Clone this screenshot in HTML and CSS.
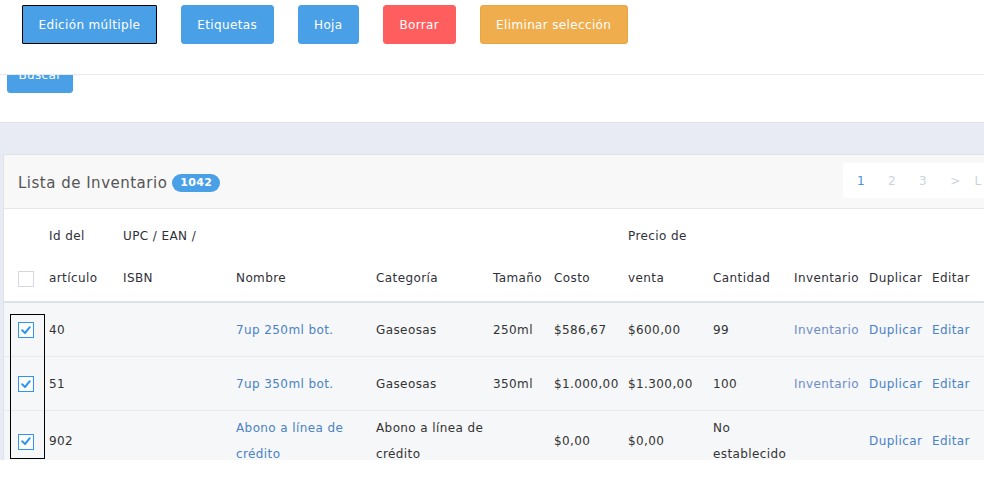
FILE: index.html
```html
<!DOCTYPE html>
<html lang="es">
<head>
<meta charset="utf-8">
<link rel="stylesheet" href="styles.css">
</head>
<body>
<div class="page">
  <div class="topbar">
    <button class="btn btn-blue btn-focus">Edición múltiple</button>
    <button class="btn btn-blue">Etiquetas</button>
    <button class="btn btn-blue">Hoja</button>
    <button class="btn btn-red">Borrar</button>
    <button class="btn btn-orange">Eliminar selección</button>
  </div>
  <div class="search-area">
    <button class="btn btn-blue btn-search">Buscar</button>
  </div>
  <div class="content">
    <div class="panel">
      <div class="panel-head">
        <div class="title">Lista de Inventario <span class="badge">1042</span></div>
        <div class="pager">
          <span class="pg active">1</span>
          <span class="pg">2</span>
          <span class="pg">3</span>
          <span class="pg pg-next">&gt;</span>
          <span class="pg">L</span>
        </div>
      </div>
      <table class="grid">
        <colgroup>
          <col class="c-cb"><col class="c-id"><col class="c-upc"><col class="c-name"><col class="c-cat"><col class="c-size"><col class="c-cost"><col class="c-price"><col class="c-qty"><col class="c-inv"><col class="c-dup"><col class="c-edit">
        </colgroup>
        <thead>
          <tr>
            <th class="cb"><span class="box"></span></th>
            <th>Id del<br>artículo</th>
            <th>UPC / EAN /<br>ISBN</th>
            <th>Nombre</th>
            <th>Categoría</th>
            <th>Tamaño</th>
            <th>Costo</th>
            <th>Precio de<br>venta</th>
            <th>Cantidad</th>
            <th>Inventario</th>
            <th>Duplicar</th>
            <th>Editar</th>
          </tr>
        </thead>
        <tbody>
          <tr>
            <td class="cb"><span class="box checked"><svg viewBox="0 0 16 16" width="16" height="16"><path d="M4.2 8.3 L7 11 L11.8 5.2" fill="none" stroke="#2f95ee" stroke-width="2" stroke-linecap="round" stroke-linejoin="round"/></svg></span></td>
            <td>40</td>
            <td></td>
            <td><a class="link">7up 250ml bot.</a></td>
            <td>Gaseosas</td>
            <td>250ml</td>
            <td>$586,67</td>
            <td>$600,00</td>
            <td>99</td>
            <td><a class="link inv">Inventario</a></td>
            <td><a class="link">Duplicar</a></td>
            <td><a class="link">Editar</a></td>
          </tr>
          <tr>
            <td class="cb"><span class="box checked"><svg viewBox="0 0 16 16" width="16" height="16"><path d="M4.2 8.3 L7 11 L11.8 5.2" fill="none" stroke="#2f95ee" stroke-width="2" stroke-linecap="round" stroke-linejoin="round"/></svg></span></td>
            <td>51</td>
            <td></td>
            <td><a class="link">7up 350ml bot.</a></td>
            <td>Gaseosas</td>
            <td>350ml</td>
            <td>$1.000,00</td>
            <td>$1.300,00</td>
            <td>100</td>
            <td><a class="link inv">Inventario</a></td>
            <td><a class="link">Duplicar</a></td>
            <td><a class="link">Editar</a></td>
          </tr>
          <tr>
            <td class="cb"><span class="box checked"><svg viewBox="0 0 16 16" width="16" height="16"><path d="M4.2 8.3 L7 11 L11.8 5.2" fill="none" stroke="#2f95ee" stroke-width="2" stroke-linecap="round" stroke-linejoin="round"/></svg></span></td>
            <td>902</td>
            <td></td>
            <td><a class="link">Abono a línea de<br>crédito</a></td>
            <td>Abono a línea de<br>crédito</td>
            <td></td>
            <td>$0,00</td>
            <td>$0,00</td>
            <td>No<br>establecido</td>
            <td></td>
            <td><a class="link">Duplicar</a></td>
            <td><a class="link">Editar</a></td>
          </tr>
        </tbody>
      </table>
    </div>
  </div>
  <div class="focus-box"></div>
</div>
</body>
</html>
```
FILE: styles.css
```css
html, body {
  margin: 0;
  padding: 0;
  background: #ffffff;
}
body {
  font-family: "DejaVu Sans", Verdana, sans-serif;
  font-size: 12px;
  letter-spacing: 0.4px;
  color: #333333;
}
.page {
  position: relative;
  width: 984px;
  height: 460px;
  overflow: hidden;
}
.topbar {
  position: absolute;
  top: 0;
  left: 0;
  right: 0;
  height: 75px;
  background: #ffffff;
  border-bottom: 1px solid #e6e8ee;
  display: flex;
  align-items: flex-start;
  gap: 24px;
  padding: 5px 0 0 22px;
  box-sizing: border-box;
  z-index: 2;
}
.btn {
  font-family: inherit;
  font-size: 12px;
  letter-spacing: 0.35px;
  color: #ffffff;
  border: 1px solid transparent;
  border-radius: 3px;
  height: 39px;
  padding: 0 15.5px;
  cursor: pointer;
}
.btn-blue { background: #4aa0e6; border-color: #4aa0e6; }
.btn-red { background: #ff5e5e; border-color: #ff5e5e; }
.btn-orange { background: #f0ad4e; border-color: #e8a640; }
.btn-focus { border-color: #000000; border-radius: 1px; }
.search-area {
  height: 123px;
  box-sizing: border-box;
  padding: 57px 0 0 7px;
  border-bottom: 1px solid #dfe2ea;
}
.btn-search {
  height: 36px;
  width: 66px;
  padding: 0;
}
.content {
  background: #e8ebf3;
  padding: 31px 0 0 3px;
}
.panel {
  width: 1000px;
  background: #ffffff;
  border-left: 1px solid #dfe2e8;
  border-top: 1px solid #dfe2e8;
}
.panel-head {
  height: 53px;
  background: #f8f8f8;
  border-bottom: 1px solid #e4e6ea;
  display: flex;
  align-items: center;
  justify-content: space-between;
  padding: 0 0 0 14px;
}
.title {
  font-size: 15px;
  color: #555555;
  letter-spacing: 0.5px;
  display: flex;
  align-items: center;
  gap: 5px;
  margin-top: 3px;
}
.badge {
  display: inline-block;
  background: #4aa0e6;
  color: #ffffff;
  font-size: 11px;
  font-weight: bold;
  letter-spacing: 0.3px;
  border-radius: 9px;
  height: 18px;
  line-height: 18px;
  padding: 0 8px;
}
.pager {
  background: #ffffff;
  height: 35px;
  width: 147px;
  display: flex;
  align-items: center;
  padding-left: 14px;
  align-self: flex-start;
  margin-top: 8px;
  white-space: nowrap;
}
.pg {
  flex: none;
  margin-right: 23px;
  font-size: 12px;
  color: #cdd3de;
}
.pg.pg-next { margin-right: 14px; }
.pg.active { color: #4a90e2; }
.grid {
  border-collapse: collapse;
  table-layout: fixed;
  width: 986px;
}
.c-cb { width: 41px; }
.c-id { width: 74px; }
.c-upc { width: 113px; }
.c-name { width: 140px; }
.c-cat { width: 117px; }
.c-size { width: 61px; }
.c-cost { width: 74px; }
.c-price { width: 85px; }
.c-qty { width: 81px; }
.c-inv { width: 75px; }
.c-dup { width: 63px; }
.c-edit { width: 62px; }
.grid th {
  text-align: left;
  vertical-align: bottom;
  font-weight: normal;
  color: #2f2f38;
  line-height: 42px;
  padding: 6px 4px 2px;
  white-space: nowrap;
  border-bottom: 2px solid #dde1e8;
}
.grid td {
  height: 45px;
  line-height: 26px;
  padding: 4px 4px;
  white-space: nowrap;
  vertical-align: middle;
  background: #f6f7f9;
  border-bottom: 1px solid #e7eaf0;
}
.grid .cb {
  padding-left: 14px;
}
.box {
  display: inline-block;
  width: 16px;
  height: 16px;
  box-sizing: border-box;
  border: 1px solid #d5d8de;
  background: #ffffff;
  vertical-align: middle;
  position: relative;
}
.box.checked {
  border: 1.5px solid #2f95ee;
}
.box svg {
  position: absolute;
  left: -1.5px;
  top: -1.5px;
}
.link {
  color: #4a82c6;
}
.link.inv {
  color: #6d8cc6;
}
.focus-box {
  position: absolute;
  left: 10px;
  top: 314px;
  width: 33px;
  height: 143px;
  border: 1px solid #000000;
}
```
